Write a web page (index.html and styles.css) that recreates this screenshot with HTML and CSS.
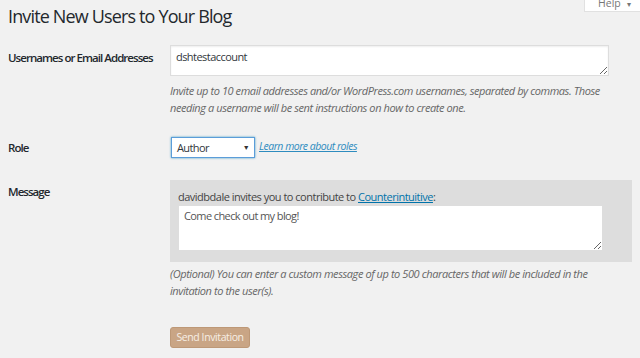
FILE: index.html
```html
<!DOCTYPE HTML>
<html>
<head>
<meta charset="utf-8">
<title>Invite New Users</title>
<link rel="stylesheet" href="styles.css">
</head>
<body>
<div class="help-tab">Help <span class="caret">&#9662;</span></div>

<div class="wrap">
	<h1>Invite New Users to Your Blog</h1>

	<div class="form-row row-users">
		<label class="label">Usernames or Email Addresses</label>
		<div class="field">
			<textarea class="users-input">dshtestaccount</textarea>
			<p class="description">Invite up to 10 email addresses and/or WordPress.com usernames, separated by commas. Those needing a username will be sent instructions on how to create one.</p>
		</div>
	</div>

	<div class="form-row row-role">
		<label class="label">Role</label>
		<div class="field role-field">
			<div class="select-box">Author <span class="select-arrow">&#9660;</span></div>
			<a class="roles-link" href="javascript:;">Learn more about roles</a>
		</div>
	</div>

	<div class="form-row row-message">
		<label class="label">Message</label>
		<div class="field">
			<div class="message-box">
				<div class="message-intro">davidbdale invites you to contribute to <a href="javascript:;">Counterintuitive</a>:</div>
				<textarea class="message-input">Come check out my blog!</textarea>
			</div>
			<p class="description">(Optional) You can enter a custom message of up to 500 characters that will be included in the invitation to the user(s).</p>
		</div>
	</div>

	<div class="submit-row">
		<span class="button-primary">Send Invitation</span>
	</div>
</div>
</body>
</html>
```

FILE: styles.css
```css
* {margin:0; padding:0; box-sizing:border-box;}
body {background:#f1f1f1; color:#23282d; font-family:"Open Sans", "Noto Sans", sans-serif; font-size:11px; letter-spacing:-0.5px; overflow:hidden;}

/* help tab hangs from the top edge */
.help-tab {position:absolute; top:-8px; left:584px; width:60px; height:20px; padding:3px 0 0 13px; background:#fff; border:1px solid #e1e1e1; color:#777; font-size:10.5px; line-height:14px; letter-spacing:0;}
.help-tab .caret {font-size:8px; margin-left:4px;}

.wrap {padding:0 0 0 8px;}
h1 {font-size:18px; font-weight:400; line-height:26px; padding-top:3px; letter-spacing:-0.85px;}

.form-row {display:grid; grid-template-columns:162px 1fr;}
.label {font-weight:600; font-size:11.5px; letter-spacing:-0.95px; white-space:nowrap;}
.field {width:462px;}

.row-users {margin-top:16px;}
.row-users .label {padding-top:5px;}
.users-input {display:block; width:439px; height:31px; padding:3px 5px; border:1px solid #ddd; background:#fff; color:#32373c; font-family:inherit; font-size:11px; letter-spacing:-0.55px; resize:vertical; box-shadow:inset 0 1px 2px rgba(0,0,0,.07);}

.description {width:440px; margin-top:6px; color:#666; font-style:italic; font-size:11px; line-height:17px; letter-spacing:-0.42px;}

.row-role {margin-top:21px;}
.row-role .label {padding-top:3px;}
.role-field {display:flex; align-items:center; gap:4px;}
.select-box {display:flex; justify-content:space-between; align-items:center; width:84px; height:21px; padding:0 5px 0 5px; margin-left:1px; background:#fff; border:1px solid #5b9dd9; box-shadow:0 0 2px rgba(30,140,190,.8); font-size:11px; letter-spacing:-0.6px; color:#32373c;}
.select-arrow {font-size:7px; color:#333;}
.roles-link {color:#2e8cbf; font-style:italic; font-size:10.5px; letter-spacing:-0.5px; margin-top:-4px;}

.row-message {margin-top:22px;}
.row-message .label {padding-top:4px;}
.message-box {background:#dddddd; padding:9px 29px 10px 8px; height:82px;}
.message-intro {font-size:11px; line-height:16px; color:#444;}
.message-intro a {color:#0073aa;}
.message-input {display:block; width:425px; height:46px; padding:2px 5px; border:1px solid #ddd; background:#fff; color:#555; font-family:inherit; font-size:11px; letter-spacing:-0.6px; resize:vertical; border-radius:0;}
.row-message .description {margin-top:3px;}

.submit-row {padding:28px 0 0 162px;}
.button-primary {display:inline-block; width:80px; height:21px; line-height:19px; text-align:center; white-space:nowrap; background:#c9a585; border:1px solid #bd9877; border-radius:3px; color:#f7efe6; font-size:10.5px; letter-spacing:-0.4px;}
```
